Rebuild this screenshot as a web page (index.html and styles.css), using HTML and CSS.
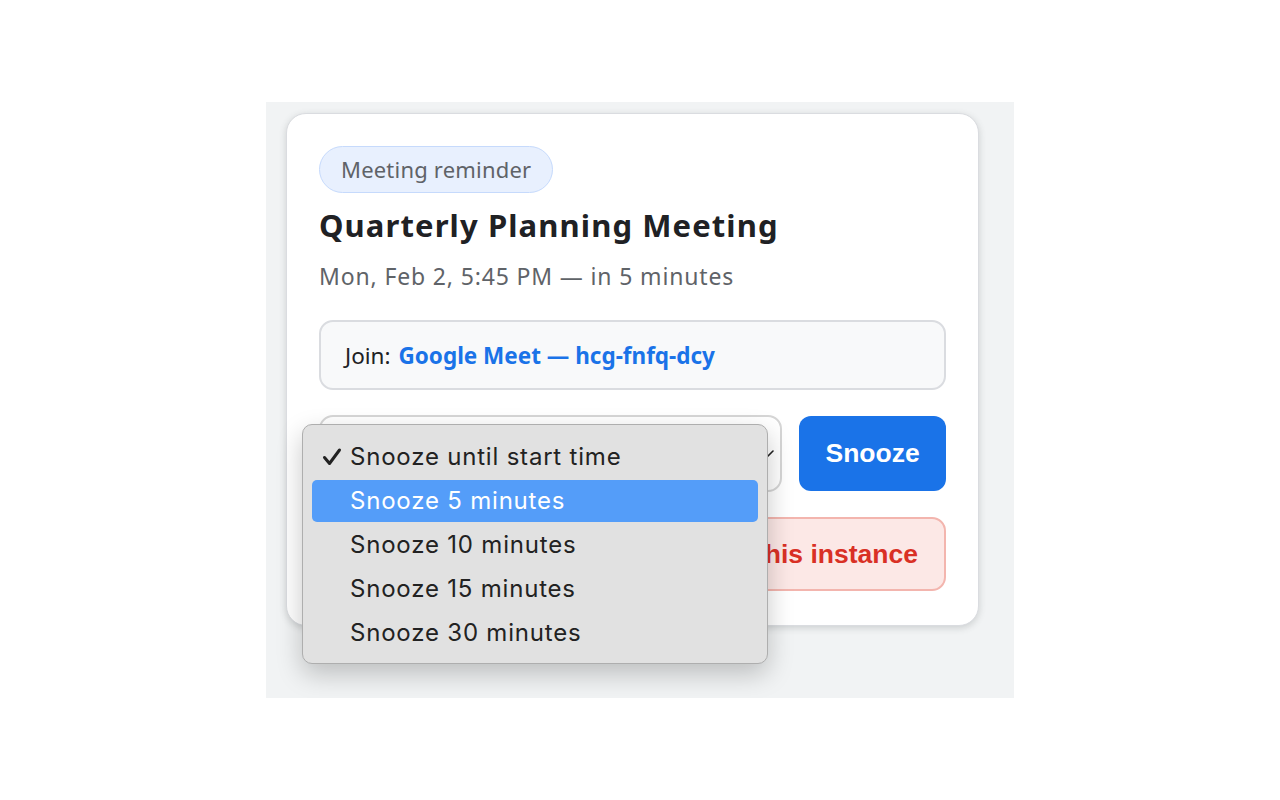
FILE: index.html
```html
<!DOCTYPE html>
<html lang="en">
<head>
    <meta charset="UTF-8">
    <meta name="viewport" content="width=device-width, initial-scale=1.0">
    <title>Meeting reminder</title>
    <link rel="stylesheet" href="styles.css">
</head>
<body>

<div class="stage">
    <div class="card">
        <span class="badge">Meeting reminder</span>
        <h2 class="title">Quarterly Planning Meeting</h2>
        <p class="when">Mon, Feb 2, 5:45 PM — in 5 minutes</p>

        <div class="join">
            Join: <a href="#" class="join-link">Google Meet — hcg-fnfq-dcy</a>
        </div>

        <div class="snooze-row">
            <div class="select">
                <span class="select-value">Snooze until start time</span>
                <svg class="chevron" width="13" height="8" viewBox="0 0 13 8"><path d="M1 1l5.5 5.5L12 1" fill="none" stroke="#222" stroke-width="1.6" stroke-linecap="round" stroke-linejoin="round"/></svg>
            </div>
            <button class="btn btn-primary">Snooze</button>
        </div>

        <div class="action-row">
            <button class="btn btn-danger">Skip this instance</button>
        </div>

        <!-- open native select popup -->
        <ul class="menu">
            <li class="menu-item">
                <svg class="check" width="20" height="20" viewBox="0 0 20 20"><path d="M2.5 10.5l5 6L17.5 3" fill="none" stroke="#222" stroke-width="3" stroke-linecap="round" stroke-linejoin="round"/></svg>
                Snooze until start time
            </li>
            <li class="menu-item active">Snooze 5 minutes</li>
            <li class="menu-item">Snooze 10 minutes</li>
            <li class="menu-item">Snooze 15 minutes</li>
            <li class="menu-item">Snooze 30 minutes</li>
        </ul>
    </div>
</div>

</body>
</html>
```

FILE: styles.css
```css
* { margin: 0; padding: 0; box-sizing: border-box; }
body { background: #fff; font-family: "Trebuchet MS", "Noto Sans", sans-serif; }

.stage {
    width: 748px; height: 596px; margin: 102px auto 0;
    background: #f1f3f4; padding: 11px 0 0 20px;
}
.card {
    position: relative;
    width: 693px; height: 513px; padding: 32px;
    background: #fff; border: 1px solid #dadce0; border-radius: 20px;
    box-shadow: 0 2px 7px rgba(60, 64, 67, 0.2);
}
.badge {
    display: inline-block; height: 47px; line-height: 45px; padding: 0 21px;
    background: #e8f0fe; border: 1px solid #c6dafc; border-radius: 24px;
    color: #5f6368; font-size: 22px; letter-spacing: 0.2px;
}
.title { margin-top: 12px; font-size: 31px; line-height: 40px; letter-spacing: 1.1px; color: #202124; font-weight: bold; }
.when { margin-top: 16px; font-size: 23px; line-height: 30px; letter-spacing: 0.85px; color: #5f6368; }

.join {
    margin-top: 29px; height: 70px; padding: 0 24px;
    display: flex; align-items: center; gap: 8px;
    background: #f8f9fa; border: 2px solid #dadce0; border-radius: 14px;
    font-size: 22.5px; color: #202124;
}
.join-link { color: #1a73e8; font-weight: bold; text-decoration: none; }

.snooze-row { margin-top: 25px; display: flex; gap: 17px; align-items: center; }
.select {
    width: 464px; height: 77px; padding: 0 6px 0 24px;
    display: flex; align-items: center; justify-content: space-between;
    background: #fff; border: 2px solid #d6d6d6; border-radius: 14px;
    font-family: Inter, "Liberation Sans", sans-serif; font-size: 22px; color: #202124;
}
.btn {
    height: 75px; border-radius: 12px; padding: 0 26px;
    font-family: "Liberation Sans", Arial, sans-serif; font-size: 26.5px; font-weight: bold;
    cursor: pointer;
}
.btn-primary { width: 147px; padding: 0; background: #1a73e8; color: #fff; border: none; }
.action-row { margin-top: 25px; display: flex; justify-content: flex-end; }
.btn-danger {
    height: 74px; background: #fce8e6; color: #d93025;
    border: 2px solid #f3b5ae; border-radius: 14px;
}

.menu {
    position: absolute; left: 15px; top: 310px;
    width: 466px; height: 240px; padding: 10px 9px;
    list-style: none; background: #e1e1e1;
    border: 1px solid #aeaeae; border-radius: 10px;
    box-shadow: 0 10px 26px rgba(0, 0, 0, 0.22);
    font-family: Inter, "Liberation Sans", sans-serif; font-size: 24px; letter-spacing: 0.8px; color: #222;
}
.menu-item {
    position: relative; height: 44px; line-height: 44px; padding-left: 38px;
    border-radius: 5px;
}
.menu-item.active { background: #549df9; color: #fff; height: 42px; line-height: 42px; margin: 1px 0; }
.check { position: absolute; left: 10px; top: 12px; }
```
